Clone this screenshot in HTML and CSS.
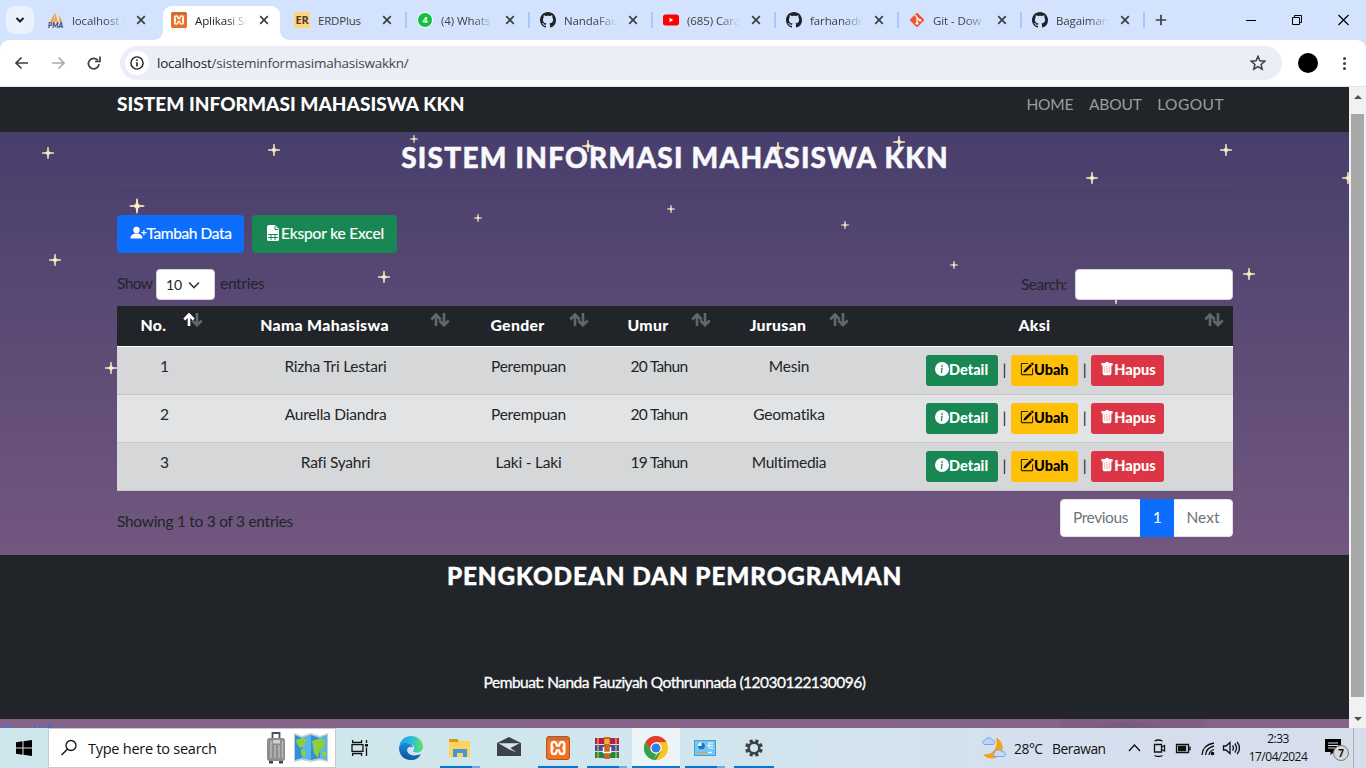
FILE: index.html
```html
<!DOCTYPE html>
<html lang="id">
<head>
<meta charset="utf-8">
<title>Aplikasi Sistem Informasi Mahasiswa KKN</title>
<link rel="stylesheet" href="styles.css">
</head>
<body>
<svg class="defs" width="0" height="0">
  <symbol id="x" viewBox="0 0 10 10"><path d="M1.2 1.2l7.6 7.6M8.8 1.2L1.2 8.8" stroke="#3c4043" stroke-width="1.7" fill="none"/></symbol>
  <symbol id="github" viewBox="0 0 16 16"><path fill="#1f2328" d="M8 0C3.58 0 0 3.58 0 8c0 3.54 2.29 6.53 5.47 7.59.4.07.55-.17.55-.38 0-.19-.01-.82-.01-1.49-2.01.37-2.53-.49-2.69-.94-.09-.23-.48-.94-.82-1.13-.28-.15-.68-.52-.01-.53.63-.01 1.08.58 1.23.82.72 1.21 1.87.87 2.33.66.07-.52.28-.87.51-1.07-1.78-.2-3.64-.89-3.64-3.95 0-.87.31-1.59.82-2.15-.08-.2-.36-1.02.08-2.12 0 0 .67-.21 2.2.82.64-.18 1.32-.27 2-.27s1.36.09 2 .27c1.53-1.04 2.2-.82 2.2-.82.44 1.1.16 1.92.08 2.12.51.56.82 1.27.82 2.15 0 3.07-1.87 3.75-3.65 3.95.29.25.54.73.54 1.48 0 1.07-.01 1.93-.01 2.2 0 .21.15.46.55.38A8.01 8.01 0 0 0 16 8c0-4.42-3.58-8-8-8z"/></symbol>
  <symbol id="xampp" viewBox="0 0 24 24"><rect x=".5" y=".5" width="23" height="23" rx="2.500" fill="#f37021" stroke="#b5541c"/><path d="M1 3q0-2 2-2h18q2 0 2 2v1H1z" fill="#c96a3a"/><path d="M8 8.300v7.400M16 8.300v7.400M8 12h8" fill="none" stroke="#fff" stroke-width="7" stroke-linecap="round"/><path d="M8 8.500l1.300 3.500L8 15.500M16 8.500L14.700 12l1.300 3.500M9 12h6" fill="none" stroke="#f37021" stroke-width="2.600" stroke-linecap="round" stroke-linejoin="round"/></symbol>
  <symbol id="star" viewBox="-8 -8 16 16"><path d="M0-8Q.6-1.400 1.800-1.200 2-.5 8 0 2 .5 1.800 1.200.6 1.400 0 8-.6 1.400-1.800 1.200-2 .5-8 0-2-.5-1.800-1.200-.6-1.400 0-8z" fill="#fff0c4" stroke="#fff0c4" stroke-width="1"/></symbol>
  <symbol id="info" viewBox="0 0 16 16"><path fill="#fff" d="M8 16A8 8 0 1 0 8 0a8 8 0 0 0 0 16zm.93-9.412-1 4.705c-.07.34.029.533.304.533.194 0 .487-.07.686-.246l-.088.416c-.287.346-.92.598-1.465.598-.703 0-1.002-.422-.808-1.319l.738-3.468c.064-.293.006-.399-.287-.47l-.451-.081.082-.381 2.290-.287zM8 5.500a1 1 0 1 1 0-2 1 1 0 0 1 0 2z"/></symbol>
  <symbol id="pencil" viewBox="0 0 16 16"><path d="M15.502 1.940a.5.5 0 0 1 0 .706L14.459 3.690l-2-2L13.502.646a.5.5 0 0 1 .707 0l1.293 1.293zm-1.750 2.456-2-2L4.939 9.210a.5.5 0 0 0-.121.196l-.805 2.414a.25.25 0 0 0 .316.316l2.414-.805a.5.5 0 0 0 .196-.12l6.813-6.814z"/><path d="M1 13.500A1.500 1.500 0 0 0 2.500 15h11a1.500 1.500 0 0 0 1.500-1.500v-6a.5.5 0 0 0-1 0v6a.5.5 0 0 1-.5.5h-11a.5.5 0 0 1-.5-.5v-11a.5.5 0 0 1 .5-.5H9a.5.5 0 0 0 0-1H2.500A1.500 1.500 0 0 0 1 2.500v11z"/></symbol>
  <symbol id="trash" viewBox="0 0 16 16"><path fill="#fff" d="M2.500 1a1 1 0 0 0-1 1v1a1 1 0 0 0 1 1H3v9a2 2 0 0 0 2 2h6a2 2 0 0 0 2-2V4h.5a1 1 0 0 0 1-1V2a1 1 0 0 0-1-1H10a1 1 0 0 0-1-1H7a1 1 0 0 0-1 1H2.500z"/><path d="M5.500 5v7.500M8 5v7.500M10.500 5v7.500" stroke="#f0a7a0" stroke-width="1"/></symbol>
  <symbol id="sort" viewBox="0 0 20 14"><path class="down" d="M14 0v12M9.300 7.500l4.700 4.700 4.700-4.700"/><path class="up" d="M6 13V2M1.300 6.500L6 1.500l4.700 5"/></symbol>
</svg>

<header class="tabs">
  <div class="tabsearch"><svg width="10" height="8" viewBox="0 0 10 8"><path d="M1.500 2l3.500 3.500L8.500 2" fill="none" stroke="#1f1f1f" stroke-width="2"/></svg></div>
  <div class="tab"><svg class="fav" viewBox="0 0 16 16"><path d="M2 10L6.500 1v9zM7 10V0l3 10zM11 10l.5-7 3 7z" fill="#f5a343"/><text x="0" y="15.500" class="pma" textLength="15">PMA</text></svg><span class="ttl">localhost /</span><svg class="cls"><use href="#x"/></svg></div>
  <div class="tab active"><svg class="fav"><use href="#xampp"/></svg><span class="ttl">Aplikasi Si</span><svg class="cls"><use href="#x"/></svg></div>
  <div class="tab sep"><span class="fav er">ER</span><span class="ttl full">ERDPlus</span><svg class="cls"><use href="#x"/></svg></div>
  <div class="tab sep"><span class="fav wa">4</span><span class="ttl">(4) Whats</span><svg class="cls"><use href="#x"/></svg></div>
  <div class="tab sep"><svg class="fav"><use href="#github"/></svg><span class="ttl">NandaFau</span><svg class="cls"><use href="#x"/></svg></div>
  <div class="tab sep"><svg class="fav" viewBox="0 0 16 16"><rect y="2.500" width="16" height="11" rx="2.500" fill="#f00"/><path d="M6.500 5.700v4.600L10.300 8z" fill="#fff"/></svg><span class="ttl">(685) Cara</span><svg class="cls"><use href="#x"/></svg></div>
  <div class="tab sep"><svg class="fav"><use href="#github"/></svg><span class="ttl">farhanade</span><svg class="cls"><use href="#x"/></svg></div>
  <div class="tab sep"><svg class="fav" viewBox="0 0 16 16"><rect x="2.700" y="2.700" width="10.600" height="10.600" rx="1" transform="rotate(45 8 8)" fill="#f4512c"/><path d="M6 3l2 2.200v6M8 5.500l3 3" stroke="#fff" stroke-width="1.200" fill="none"/><circle cx="8" cy="11.300" r="1.400" fill="#fff"/><circle cx="11" cy="8.300" r="1.300" fill="#fff"/></svg><span class="ttl">Git - Dow</span><svg class="cls"><use href="#x"/></svg></div>
  <div class="tab sep"><svg class="fav"><use href="#github"/></svg><span class="ttl">Bagaiman</span><svg class="cls"><use href="#x"/></svg></div>
  <svg class="plus" width="12" height="12" viewBox="0 0 12 12"><path d="M6 .8v10.400M.8 6h10.400" stroke="#3c4043" stroke-width="1.700"/></svg>
  <svg class="wins" width="104" height="14" viewBox="0 0 104 14" fill="none" stroke="#000"><path d="M0 7.500h10"/><path d="M46.500 4.500h7v7h-7zM48.500 4.500v-2h7v7h-2"/><path d="M92.500 2l10 10M102.500 2l-10 10" stroke-width="1.200"/></svg>
</header>

<div class="toolbar">
  <svg class="navs" width="90" height="16" viewBox="0 0 90 16" fill="none" stroke-width="1.700"><path d="M14 8H2.500M7.500 2.500L2 8l5.500 5.500" stroke="#3c4043"/><path d="M38 8h11.500M44.500 2.500L50 8l-5.500 5.500" stroke="#a9abae"/><path d="M84 5.500A5.300 5.300 0 1 0 85 9" stroke="#3c4043"/><path d="M86 1.500v5h-5" stroke="#3c4043"/></svg>
  <div class="omni">
    <span class="site"><svg width="14" height="14" viewBox="0 0 14 14"><circle cx="7" cy="7" r="6.100" fill="none" stroke="#1f1f1f" stroke-width="1.400"/><path d="M7 6.200v4.200M7 3.500v1.500" stroke="#1f1f1f" stroke-width="1.600"/></svg></span>
    <span class="url"><b>localhost</b>/sisteminformasimahasiswakkn/</span>
    <svg class="fave" width="16" height="16" viewBox="0 0 16 16"><path d="M8 1.300l1.900 4.500 4.900.4-3.700 3.200 1.100 4.800L8 11.600l-4.200 2.600 1.100-4.800L1.200 6.200l4.900-.4z" fill="none" stroke="#3c4043" stroke-width="1.500"/></svg>
  </div>
  <span class="avatar"></span>
  <span class="kebab"><i></i><i></i><i></i></span>
</div>

<main class="view">
  <div class="page">
    <svg class="sky" width="1349" height="641">
      <use href="#star" x="42" y="60" width="12" height="12"/><use href="#star" x="268" y="57" width="12" height="12"/><use href="#star" x="410" y="48" width="8" height="8"/><use href="#star" x="582" y="53" width="12" height="12"/><use href="#star" x="772" y="55" width="12" height="12"/><use href="#star" x="893" y="49" width="12" height="12"/><use href="#star" x="1220" y="57" width="12" height="12"/><use href="#star" x="1086" y="85" width="12" height="12"/><use href="#star" x="1342" y="85" width="12" height="12"/><use href="#star" x="129.500" y="111.500" width="15" height="15"/><use href="#star" x="49" y="167" width="12" height="12"/><use href="#star" x="378" y="184" width="12" height="12"/><use href="#star" x="474" y="127" width="8" height="8"/><use href="#star" x="667" y="118" width="8" height="8"/><use href="#star" x="841" y="134" width="8" height="8"/><use href="#star" x="950" y="174" width="8" height="8"/><use href="#star" x="1243" y="181" width="12" height="12"/><use href="#star" x="1110" y="205" width="12" height="12"/><use href="#star" x="105" y="275" width="12" height="12"/>
    </svg>
    <nav class="navbar"><a class="brand">SISTEM INFORMASI MAHASISWA KKN</a><span class="links"><a>HOME</a><a>ABOUT</a><a class="wide">LOGOUT</a></span></nav>
    <section class="content">
      <h1><span>SISTEM INFORMASI MAHASISWA KKN</span></h1>
      <div class="actions">
        <a class="btn add"><svg width="17" height="16" viewBox="0 0 17 16" fill="#fff"><circle cx="6.500" cy="5" r="3.200"/><path d="M.5 13.500c0-3.500 2.500-5 6-5s6 1.500 6 5zM13.300 5h1.200v2h2v1.200h-2v2h-1.200v-2h-2V7h2z"/></svg>Tambah Data</a>
        <a class="btn xls"><svg width="16" height="16" viewBox="0 0 16 16"><path fill="#fff" d="M4 0h6l4 4v10.500q0 1.500-1.500 1.500h-9Q2 16 2 14.500V2Q2 0 4 0z"/><path d="M3 9.500h10M3 12.500h10M6 9.500V15M10 9.500V15M10 1v3.500h3" fill="none" stroke="#198754"/></svg>Ekspor ke Excel</a>
      </div>
      <div class="filters">
        <div class="show"><span>Show</span><span class="select">10<svg width="12" height="8" viewBox="0 0 12 8"><path d="M1 1.500l5 5 5-5" fill="none" stroke="#343a40" stroke-width="1.600"/></svg></span><span>entries</span></div>
        <div class="search"><span>Search:</span><span class="input"></span></div>
      </div>
      <table>
        <colgroup><col class="c1"><col class="c2"><col class="c3"><col class="c4"><col class="c5"><col class="c6"></colgroup>
        <thead><tr><th><div>No.<svg class="on"><use href="#sort"/></svg></div></th><th><div>Nama Mahasiswa<svg><use href="#sort"/></svg></div></th><th><div>Gender<svg><use href="#sort"/></svg></div></th><th><div>Umur<svg><use href="#sort"/></svg></div></th><th><div>Jurusan<svg><use href="#sort"/></svg></div></th><th><div>Aksi<svg><use href="#sort"/></svg></div></th></tr></thead>
        <tbody>
          <tr><td>1</td><td>Rizha Tri Lestari</td><td>Perempuan</td><td>20 Tahun</td><td>Mesin</td><td><div class="acts"><a class="sm d"><svg><use href="#info"/></svg>Detail</a>|<a class="sm u"><svg><use href="#pencil"/></svg>Ubah</a>|<a class="sm h"><svg><use href="#trash"/></svg>Hapus</a></div></td></tr>
          <tr><td>2</td><td>Aurella Diandra</td><td>Perempuan</td><td>20 Tahun</td><td>Geomatika</td><td><div class="acts"><a class="sm d"><svg><use href="#info"/></svg>Detail</a>|<a class="sm u"><svg><use href="#pencil"/></svg>Ubah</a>|<a class="sm h"><svg><use href="#trash"/></svg>Hapus</a></div></td></tr>
          <tr><td>3</td><td>Rafi Syahri</td><td>Laki - Laki</td><td>19 Tahun</td><td>Multimedia</td><td><div class="acts"><a class="sm d"><svg><use href="#info"/></svg>Detail</a>|<a class="sm u"><svg><use href="#pencil"/></svg>Ubah</a>|<a class="sm h"><svg><use href="#trash"/></svg>Hapus</a></div></td></tr>
        </tbody>
      </table>
      <div class="below"><span class="showing">Showing 1 to 3 of 3 entries</span><div class="pager"><a class="prev">Previous</a><a class="cur">1</a><a class="next">Next</a></div></div>
    </section>
    <footer><h2>PENGKODEAN DAN PEMROGRAMAN</h2><p>Pembuat: Nanda Fauziyah Qothrunnada (12030122130096)</p></footer>
    <div class="rest"><a>Creati Tel</a><svg width="289" height="9"><path d="M0 0h150l-5 9H0z" fill="#805f86"/><path d="M38 9q32-14 64 0z" fill="#795b80"/></svg></div>
  </div>
  <div class="scroll"><i class="au"></i><i class="thumb"></i><i class="ad"></i></div>
</main>

<div class="taskbar">
  <div class="start"><svg width="16" height="16" viewBox="0 0 16 16"><path d="M0 2.300L6.500 1.300v6.200H0zM7.500 1.200L16 0v7.500H7.500zM0 8.500h6.500v6.200L0 13.700zM7.500 8.500H16V16l-8.500-1.200z"/></svg></div>
  <div class="find">
    <svg width="18" height="18" viewBox="0 0 18 18"><circle cx="11" cy="6.500" r="5" fill="none" stroke="#111" stroke-width="1.300"/><path d="M7.400 10.200L1.500 16" stroke="#111" stroke-width="1.400"/></svg>
    <span>Type here to search</span>
    <svg class="trip" width="64" height="34" viewBox="0 0 64 34"><path d="M7.500 7V2h7v5" fill="none" stroke="#554a68" stroke-width="1.800"/><rect x="2" y="7" width="18" height="23" rx="2.500" fill="#8e8e8e"/><path d="M6 10v17M10 14v13M14 14v13M17.500 10v17" stroke="#c0c0c0" stroke-width="1.300"/><rect x="8" y="9" width="7" height="3.500" fill="#d7c8d2"/><path d="M4 30h4v2.500H4zM14 30h4v2.500h-4z" fill="#444"/><path d="M29 2l8 3 9-3 9 3 8-3v29l-8-2-9 2-9-2-8 2z" fill="#c3cdd6"/><path d="M30 4l7 3 9-3 9 3 7-3v25l-7-2-9 2-9-2-7 2z" fill="#2f8fd8"/><path d="M37 7l9-3v25l-9-2zM55 7l7-3v25l-7-2z" fill="#56b5ee"/><path d="M31 9l6-2 5 1-3 7-4 2-3-4zM36 18l5 2-1 7-4-4zM47 10l9-3 4 3-1 7-4 2-2 8-4-5zM57 20l4 1v5l-4-1z" fill="#8cd13b"/></svg>
  </div>
  <div class="app view-btn"><svg width="18" height="16" viewBox="0 0 18 16" fill="none" stroke="#111" stroke-width="1.300"><path d="M1.600 0v2.500h9V0M1.600 16v-2.500h9V16M1 4.700h11v6.600H1zM15.500 0v3M15.500 7.500V16"/><path d="M14 5.300h3" stroke-width="2.500"/></svg></div>
  <div class="app"><svg width="24" height="24" viewBox="0 0 24 24"><defs><linearGradient id="eg" x1="0" x2="1"><stop stop-color="#1ba2dd"/><stop offset=".55" stop-color="#2cc0d8"/><stop offset="1" stop-color="#66e05b"/></linearGradient><linearGradient id="eb" x2="0" y2="1"><stop stop-color="#1a8ee0"/><stop offset="1" stop-color="#124c9c"/></linearGradient></defs><path d="M.3 10C1.500 3.500 6.500 0 12 0c7 0 12 5 12 10.500 0 4-3 6-6 6-3 0-4.500-1-3.500-2.300 1.800-2.500.5-5.700-3-5.700C7 6 3 7 .3 10z" fill="url(#eg)"/><path d="M.1 11C1.500 7.500 5 6.300 8 7c4 .8 5.800 2.500 6 4.500-3-2-6.500 0-6.500 4 0 4.500 4 8 8.500 8.100-1.200.4-2.500.4-4 .4C4 24-.5 17.500.1 11z" fill="url(#eb)"/><path d="M8.500 11.500c-2 5.500 3.500 10.500 13.500 6.500-1.500 3-4.500 5.700-8 6-6-.5-9-7-5.500-12.500z" fill="#1763ae"/></svg></div>
  <div class="app run more"><svg width="22" height="19" viewBox="0 0 22 19"><path d="M0 1q0-1 1-1h7l2 2h11v16H0z" fill="#ffd35d"/><path d="M0 1q0-1 1-1h7l2 2-1 1H0z" fill="#d59c13"/><path d="M4 18v-8h14v8h-4v-4H8v4z" fill="#3e97dc"/></svg></div>
  <div class="app"><svg class="mail" width="24" height="20" viewBox="0 0 24 20"><path d="M0 6l12-6 12 6v13H0z" fill="#3b4248"/><path d="M1.500 6.300h21L13.500 11l6 4.500-8-3.500z" fill="#d3e6ee"/></svg></div>
  <div class="app run"><svg width="24" height="24"><use href="#xampp"/></svg></div>
  <div class="app run more"><svg width="24" height="22" viewBox="0 0 24 22"><path d="M0 1h24v6H0z" fill="#b51f45"/><path d="M0 8h24v6H0z" fill="#4a49a5"/><path d="M0 15h24v6H0z" fill="#228343"/><path d="M3 1v20M21 1v20" stroke="#e2bd4c" stroke-width="1.200"/><path d="M9 0h6v22H9z" fill="#c56a21"/><path d="M9.500 2h5v5h-5z" fill="#f0b334"/><path d="M8.500 10v5.500h7V10" fill="none" stroke="#fff" stroke-width="1.500"/></svg></div>
  <div class="app run here"><svg width="24" height="24" viewBox="0 0 24 24"><circle cx="12" cy="12" r="12" fill="#fcc31e"/><path d="M1.600 6A12 12 0 0 1 22.400 6H12L6.800 15z" fill="#e33b2e"/><path d="M1.600 6L6.800 15 12 18l-1.800 6A12 12 0 0 1 1.600 6z" fill="#2da44e"/><path d="M17.200 15L12 24l-1.800-.2 3.800-7z" fill="#2da44e"/><circle cx="12" cy="12" r="5.700" fill="#fff"/><circle cx="12" cy="12" r="4.500" fill="#2f7de9"/></svg></div>
  <div class="app run more"><svg width="22" height="16" viewBox="0 0 22 16"><rect x=".5" y=".5" width="21" height="15" fill="#6fc8f5" stroke="#4a9fd0"/><circle cx="7.500" cy="6" r="3.500" fill="#fff"/><path d="M7.500 6V2.500A3.500 3.500 0 1 1 4 6z" fill="#1d74c4"/><path d="M13 5.500h2M15 3v5M15 3h4M15 5.500h4M15 8h4" stroke="#fff"/><path d="M4 12.500h9" stroke="#f39a25" stroke-width="1.300"/><path d="M14 12.500h4" stroke="#fff" stroke-width="1.300"/></svg></div>
  <div class="app run"><svg width="20" height="20" viewBox="-10 -10 20 20"><g stroke="#3b4248" stroke-width="3.400"><path d="M-3.400-8.200L3.400 8.200M3.400-8.200L-3.400 8.200M-8.200-3.400L8.200 3.400M8.200-3.400L-8.200 3.400"/></g><circle r="5.200" fill="#d3e3ec" stroke="#3b4248" stroke-width="2.400"/></svg></div>
  <div class="tray">
    <svg class="moon" width="26" height="24" viewBox="0 0 26 24"><path d="M15 1.500C25 6.500 24 22 11 22.500 6.500 22.700 3.500 20.500 2 18c8 2 16-5 13-16.500z" fill="#f6a21d"/><path d="M3 8.500a2.500 2.500 0 0 1 1-4.500 4.200 4.200 0 0 1 7.500 0 2.400 2.400 0 0 1 1 4.500z" fill="#b8d2f8" stroke="#7ca3e2"/><path d="M14 20.500a2.600 2.600 0 0 1 0-4.600 4 4 0 0 1 7 0 2.400 2.400 0 0 1 2 4.600z" fill="#c6dcfb" stroke="#7ca3e2"/></svg>
    <span class="temp">28°C</span><span class="sky-text">Berawan</span>
    <svg class="sys" width="112" height="18" viewBox="0 0 112 18" fill="none" stroke="#111" stroke-width="1.300"><path d="M1 12l5.500-6 5.500 6"/><path d="M26.500 5.500h7v7.500h-7zM33.500 8l3-1.500v5.500l-3-1.500M26.500 2q4-2 8 0M26.500 16.500q4 2 8 0"/><path d="M48.500 5.500h12v8h-12zM62 7.500v4"/><path d="M50.500 7.500h7v4h-7z" fill="#111"/><path d="M74 16q.5-10 12-12M77.500 16q.5-7 8.500-9M81 16q.5-4 5-5.500"/><circle cx="84.500" cy="14.500" r="1.200" fill="#111"/><path d="M95.500 7h2.500l4-3.500v11L98 11h-2.500zM104.500 6.500q2 2.500 0 5M106.800 4.500q3.500 4.500 0 9M109 2.800q5 6.200 0 12.400"/></svg>
    <span class="clock"><span>2:33</span><span>17/04/2024</span></span>
    <span class="note"><svg width="18" height="16" viewBox="0 0 18 16"><path d="M0 0h16v13H9l-3.500 3v-3H0z"/><path d="M3 4h10M3 6.500h10M3 9h7" stroke="#d8e0ee"/></svg><b>7</b></span>
    <i class="desk"></i>
  </div>
</div>
</body>
</html>
```
FILE: styles.css
```css
* { box-sizing: border-box; }
body { margin: 0; width: 1366px; height: 768px; overflow: hidden; display: flex; flex-direction: column; background: #d3e3fd; font-family: "Lato", sans-serif; font-size: 15.500px; letter-spacing: -.22px; color: #212529; }
.defs { position: absolute; }

/* browser tab strip */
.tabs { height: 40px; flex: none; background: #d3e3fd; display: flex; font-family: "Open Sans", sans-serif; font-size: 11.500px; color: #3c4043; align-items: center; }
.tabsearch { width: 28px; height: 28px; margin: 0 6px; border-radius: 9px; background: #ebf2fe; display: flex; align-items: center; justify-content: center; flex: none; }
.tab { position: relative; width: 117px; height: 34px; margin: 6px 6px 0 0; padding: 0 11px 6px 8px; display: flex; align-items: center; flex: none; }
.tab.active { background: #fff; border-radius: 9px 9px 0 0; color: #1f1f1f; }
.tab.active::before, .tab.active::after { content: ""; position: absolute; bottom: 0; width: 9px; height: 9px; }
.tab.active::before { left: -9px; background: radial-gradient(circle at 0 0, transparent 8.5px, #fff 9px); }
.tab.active::after { right: -9px; background: radial-gradient(circle at 100% 0, transparent 8.5px, #fff 9px); }
.tab.sep::after { content: ""; position: absolute; left: 119px; top: 6px; width: 2px; height: 16px; background: #a8c7fa; }
.fav { width: 16px; height: 16px; flex: none; }
.pma { font: italic 900 7px "Lato", sans-serif; fill: #3f3d6b; }
.er { background: #fbd87f; color: #553c33; font-weight: 700; font-size: 11px; line-height: 16px; text-align: center; letter-spacing: -.3px; }
.wa { background: #0fc13e; color: #fff; border: 1px solid #fff; border-radius: 50%; font-size: 9px; font-weight: 700; line-height: 13px; text-align: center; }
.ttl { margin-left: 8px; width: 54px; white-space: nowrap; letter-spacing: -.1px; line-height: 18px; padding-top: 1px; -webkit-mask-image: linear-gradient(90deg, #000 60%, transparent 98%); mask-image: linear-gradient(90deg, #000 60%, transparent 98%); }
.ttl.full { -webkit-mask-image: none; mask-image: none; letter-spacing: -.2px; }
.cls { width: 10px; height: 10px; margin-left: 10px; flex: none; }
.plus { margin-left: 8px; flex: none; }
.wins { margin: 0 16px 0 auto; flex: none; }

.toolbar { height: 47px; flex: none; background: #fff; border-radius: 9px 9px 0 0; border-bottom: 1px solid #dde5e2; display: flex; align-items: center; padding-left: 14px; }
.navs { margin-right: 16px; }
.omni { width: 1162px; height: 34px; border-radius: 17px; background: #ebeef7; display: flex; align-items: center; padding: 0 16px 0 5px; }
.site { width: 24px; height: 24px; border-radius: 50%; background: #fff; display: flex; align-items: center; justify-content: center; margin-right: 8px; }
.url { font: 13.500px "Open Sans", sans-serif; color: #474747; letter-spacing: -.22px; }
.url b { font-weight: 400; color: #1f1f1f; }
.fave { margin-left: auto; }
.avatar { width: 20px; height: 20px; border-radius: 50%; background: #000; margin: 0 25px 0 16px; }
.kebab { display: flex; flex-direction: column; gap: 2px; }
.kebab i { width: 3px; height: 3px; border-radius: 50%; background: #3c4043; }

/* web page */
.view { height: 641px; flex: none; display: flex; overflow: hidden; }
.page { position: relative; width: 1349px; height: 641px; background: linear-gradient(#483e6c 45px, #72577f 468px, #866489 641px); overflow: hidden; }
.sky { position: absolute; left: 0; top: 0; }
.navbar { position: relative; height: 45px; background: #212529; padding: 0 125px 12px 117px; display: flex; align-items: center; justify-content: space-between; }
.brand { font: 900 19px "Lato", sans-serif; color: #fff; letter-spacing: .04px; white-space: nowrap; }
.links { display: flex; gap: 15.500px; color: #9b9d9e; letter-spacing: -.15px; }
.links .wide { letter-spacing: .45px; }
.content { position: relative; height: 423px; padding: 9px 116px 0 117px; }
h1 { margin: 0 0 24px; height: 50px; border-bottom: 1px solid #443b62; text-align: center; font-size: 28px; font-weight: 900; line-height: 32px; color: #f8f9fa; letter-spacing: 1.250px; white-space: nowrap; -webkit-text-stroke: .5px #f8f9fa; }
.actions { display: flex; gap: 8px; height: 38px; }
.btn { height: 38px; border-radius: 4px; color: #fff; display: flex; align-items: center; justify-content: center; white-space: nowrap; padding-bottom: 2px; letter-spacing: -.4px; -webkit-text-stroke: .2px #fff; }
.add { width: 127px; background: #0d6efd; }
.xls { width: 145px; background: #198754; letter-spacing: -.15px; }
.filters { height: 31px; margin: 16px 0 6px; display: flex; justify-content: space-between; }
.show, .search { display: flex; align-items: center; }
.show > span:first-child { width: 39px; letter-spacing: -.6px; padding-bottom: 3px; }
.show > span:last-child { margin-left: 5px; padding-bottom: 3px; letter-spacing: -.3px; }
.select { width: 59px; height: 31px; background: #fff; border: 1px solid #ced4da; border-radius: 4px; display: flex; align-items: center; padding: 0 14px 0 9px; justify-content: space-between; font-size: 14px; }
.search > span:first-child { letter-spacing: -.5px; padding-bottom: 2px; }
.input { width: 158px; height: 31px; background: #fff; border: 1px solid #ced4da; border-radius: 4px; margin-left: 8px; }
table { width: 1116px; table-layout: fixed; border-collapse: separate; border-spacing: 0; text-align: center; }
.c1 { width: 95px; } .c2 { width: 247px; } .c3 { width: 139px; } .c4 { width: 122px; } .c5 { width: 138px; } .c6 { width: 375px; }
th { height: 41px; background: #212529; border-bottom: 1px solid #fff; padding: 0; color: #fff; font-weight: 900; font-size: 15.800px; letter-spacing: .32px; }
th div { position: relative; padding: 0 30px 2px 8px; line-height: 38px; }
th svg { position: absolute; right: 9px; top: 7px; width: 20px; height: 14px; fill: none; stroke: #64676a; stroke-width: 2.600; }
.on { --up: #fff; }
.up { stroke: var(--up, #64676a); }
td { height: 48px; padding: 8px 0 0; border-bottom: 1px solid #c6c7c8; background: #d6d7d8; vertical-align: top; line-height: 23px; }
td:nth-child(4) { letter-spacing: -.7px; }
tr:nth-child(2) td { background: #e2e3e4; }
.acts { display: flex; justify-content: center; line-height: 28px; }
.sm { height: 31px; border-radius: 3px; display: flex; align-items: center; justify-content: center; font-weight: 900; font-size: 14.500px; padding-bottom: 1px; letter-spacing: 0; }
.sm svg { width: 14px; height: 14px; margin-bottom: 2px; flex: none; }
.d { width: 72px; background: #198754; color: #fff; margin-right: 5px; }
.u { width: 67px; background: #ffc107; color: #000; margin: 0 5px 0 4.500px; }
.h { width: 73px; background: #dc3545; color: #fff; margin: 0 1px 0 5px; }
.below { display: flex; justify-content: space-between; margin-top: 8px; }
.showing { line-height: 45px; letter-spacing: -.28px; }
.pager { height: 38px; display: flex; background: #fff; border: 1px solid #dee2e6; border-radius: 4px; color: #6c757d; line-height: 35px; text-align: center; letter-spacing: -.4px; }
.prev { width: 79px; } .next { width: 58px; letter-spacing: 0; }
.cur { width: 34px; background: #0d6efd; color: #fff; margin: -1px 0; line-height: 37px; }
footer { position: relative; height: 164px; background: #212529; color: #fff; text-align: center; padding-top: 7px; }
h2 { margin: 0; font-size: 24.300px; line-height: 28px; font-weight: 900; letter-spacing: .9px; -webkit-text-stroke: .4px #fff; }
footer p { margin: 80px 0 0; line-height: 24px; letter-spacing: -.51px; -webkit-text-stroke: .3px #fff; }
.rest { position: relative; display: flex; justify-content: space-between; height: 9px; color: #3f6cf0; line-height: 22px; padding-left: 1px; }
.scroll { width: 17px; background: #f1f1f1; display: flex; flex-direction: column; align-items: center; }
.au { border: 4px solid transparent; border-top: 0; border-bottom-color: #505050; margin: 8px 0 15px; }
.thumb { width: 13px; height: 583px; background: #a8a8a8; }
.ad { border: 4px solid transparent; border-bottom: 0; border-top-color: #505050; margin-top: 20px; }

/* desktop taskbar */
.taskbar { height: 40px; flex: none; background: linear-gradient(90deg, #cfe7ec, #d1e6ee 50%, #d6deee 85%, #d6deec); display: flex; font-family: "Open Sans", sans-serif; color: #111; }
.start { width: 48px; display: flex; align-items: center; justify-content: center; }
.find { width: 288px; background: #fff; border: 1px solid #c6cbcd; display: flex; align-items: center; padding: 0 6px 0 11px; font-size: 14.500px; letter-spacing: -.25px; }
.find span { margin-left: 10px; white-space: nowrap; }
.trip { margin-left: auto; }
.app { position: relative; width: 48px; margin-right: 1px; display: flex; align-items: center; justify-content: center; flex: none; }
.view-btn { margin-right: 3px; }
.mail { margin-bottom: 2px; }
.run::after { content: ""; position: absolute; left: 4px; right: 4px; bottom: 0; height: 2px; background: #0078d7; }
.more::after { background: linear-gradient(90deg, #0078d7 80%, #67aee6 80%); }
.here { background: #edf4f8; }
.here::after { left: 0; right: 0; }
.tray { position: relative; margin-left: auto; display: flex; align-items: center; width: 386px; font-size: 13.800px; white-space: nowrap; letter-spacing: -.45px; }
.moon { margin-left: 1px; }
.temp { margin-left: 7px; width: 38px; }
.sky-text { width: 76px; }
.sys { flex: none; }
.clock { display: flex; flex-direction: column; width: 74px; margin-left: 1px; align-items: center; font-size: 12px; line-height: 18px; letter-spacing: -.5px; }
.note { position: relative; margin-left: 10px; height: 18px; }
.note b { position: absolute; left: 8px; top: 6px; width: 16px; height: 16px; border-radius: 50%; border: 1px solid #777; background: #d8d8d8; font-size: 10px; line-height: 14px; text-align: center; }
.desk { width: 1px; height: 40px; background: #a9b4c2; margin-left: 10px; }
```
